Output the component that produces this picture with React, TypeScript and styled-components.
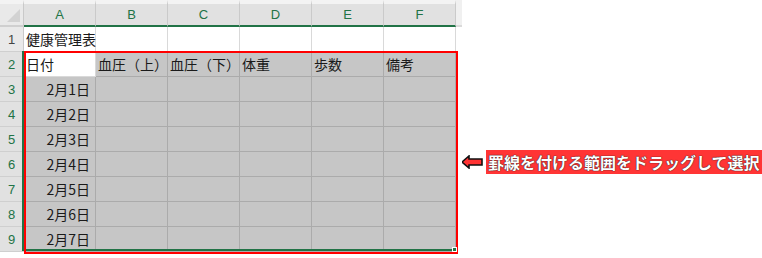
import { FC } from 'react';
import styled, { createGlobalStyle } from 'styled-components';

const COLS = ['A', 'B', 'C', 'D', 'E', 'F'];

const ROWS: string[][] = [
  ['健康管理表', '', '', '', '', ''],
  ['日付', '血圧（上）', '血圧（下）', '体重', '歩数', '備考'],
  ['2月1日', '', '', '', '', ''],
  ['2月2日', '', '', '', '', ''],
  ['2月3日', '', '', '', '', ''],
  ['2月4日', '', '', '', '', ''],
  ['2月5日', '', '', '', '', ''],
  ['2月6日', '', '', '', '', ''],
  ['2月7日', '', '', '', '', ''],
];

const App: FC = () => {
  return (
    <>
      <GlobalStyle />
      <Page>
        <Sheet>
          <Corner>
            <CornerMark />
          </Corner>
          {COLS.map((c) => (
            <ColHeader key={c}>{c}</ColHeader>
          ))}
          <HeaderTail />

          {ROWS.map((row, r) => {
            const rowNo = r + 1;
            const inSel = rowNo >= 2;
            return (
              <Row key={rowNo}>
                <RowHeader $selected={inSel}>{rowNo}</RowHeader>
                {row.map((text, c) => {
                  const active = rowNo === 2 && c === 0;
                  const isDate = rowNo >= 3 && c === 0;
                  return (
                    <Cell
                      key={c}
                      $selected={inSel && !active}
                      $right={isDate}
                    >
                      {text}
                    </Cell>
                  );
                })}
                <Tail />
              </Row>
            );
          })}

          <SelectionBorder />
          <RedFrame />
          <FillHandle />
        </Sheet>

        <Callout>
          <svg width="22" height="14" viewBox="0 0 22 14">
            <path
              d="M1 7 L8 1 L8 4 L21 4 L21 10 L8 10 L8 13 Z"
              fill="#ff3333"
              stroke="#111"
              strokeWidth="1.6"
              strokeLinejoin="miter"
            />
          </svg>
          <Label>罫線を付ける範囲をドラッグして選択</Label>
        </Callout>
      </Page>
    </>
  );
};

export default App;

// Styled Components
const GlobalStyle = createGlobalStyle`
  body {
    margin: 0;
    background: #ffffff;
    font-family: 'Noto Sans CJK JP', 'Noto Sans', sans-serif;
  }
`;

const Page = styled.div`
  display: flex;
  align-items: flex-start;
  width: 762px;
  height: 258px;
  overflow: hidden;
`;

const Sheet = styled.div`
  position: relative;
  display: grid;
  grid-template-columns: 24px repeat(6, 72px) 6px;
  grid-template-rows: 27px repeat(9, 25px);
  width: 462px;
`;

const Row = styled.div`
  display: contents;
`;

const Corner = styled.div`
  position: relative;
  box-sizing: border-box;
  background: #e9e9e9;
  border-top: 4px solid #f3f3f3;
  border-right: 1px solid #c9c9c9;
  border-bottom: 2px solid #cfcfcf;
`;

const CornerMark = styled.div`
  position: absolute;
  right: 3px;
  bottom: 3px;
  width: 0;
  height: 0;
  border-left: 13px solid transparent;
  border-bottom: 13px solid #d2d2d2;
`;

const ColHeader = styled.div`
  box-sizing: border-box;
  display: flex;
  align-items: center;
  justify-content: center;
  background: #e1e1e1;
  border-top: 4px solid #f3f3f3;
  border-right: 1px solid #cacaca;
  border-bottom: 2px solid #217346;
  color: #217346;
  font-family: 'Liberation Sans', Arial, sans-serif;
  font-size: 13px;
`;

const HeaderTail = styled.div`
  background: #f0f0f0;
  border-bottom: 2px solid #dadada;
  box-sizing: border-box;
`;

const RowHeader = styled.div<{ $selected: boolean }>`
  box-sizing: border-box;
  display: flex;
  align-items: center;
  justify-content: center;
  background: ${(p) => (p.$selected ? '#e1e1e1' : '#e9e9e9')};
  border-right: 1px solid #c9c9c9;
  border-bottom: 1px solid #cfcfcf;
  color: ${(p) => (p.$selected ? '#217346' : '#444444')};
  font-family: 'Liberation Sans', Arial, sans-serif;
  font-size: 13px;
`;

const Cell = styled.div<{ $selected: boolean; $right: boolean }>`
  box-sizing: border-box;
  display: flex;
  align-items: center;
  justify-content: ${(p) => (p.$right ? 'flex-end' : 'flex-start')};
  padding: ${(p) => (p.$right ? '0 5px 0 0' : '0 0 0 2px')};
  background: ${(p) => (p.$selected ? '#c6c6c6' : '#ffffff')};
  border-right: 1px solid ${(p) => (p.$selected ? '#ababab' : '#d9d9d9')};
  border-bottom: 1px solid ${(p) => (p.$selected ? '#ababab' : '#d9d9d9')};
  color: #1a1a1a;
  font-size: 14px;
  white-space: nowrap;
`;

const Tail = styled.div`
  background: #ffffff;
`;

const SelectionBorder = styled.div`
  position: absolute;
  left: 22px;
  top: 51px;
  width: 436px;
  height: 200px;
  box-sizing: border-box;
  border: 2px solid #217346;
  pointer-events: none;
`;

const RedFrame = styled.div`
  position: absolute;
  left: 24px;
  top: 51px;
  width: 434px;
  height: 203px;
  box-sizing: border-box;
  border: 2px solid #ff0000;
  pointer-events: none;
`;

const FillHandle = styled.div`
  position: absolute;
  left: 452px;
  top: 247px;
  width: 5px;
  height: 5px;
  box-sizing: border-box;
  background: #217346;
  border: 1px solid #ffffff;
`;

const Callout = styled.div`
  display: flex;
  align-items: center;
  gap: 3px;
  margin-top: 150px;
  margin-left: -1px;
`;

const Label = styled.div`
  height: 24px;
  display: flex;
  align-items: center;
  padding: 0 2px;
  background: #ff3535;
  color: #ffffff;
  font-size: 16px;
  font-weight: 700;
  white-space: nowrap;
  text-shadow: 0 0 1px #222, 0 0 1px #222;
`;
